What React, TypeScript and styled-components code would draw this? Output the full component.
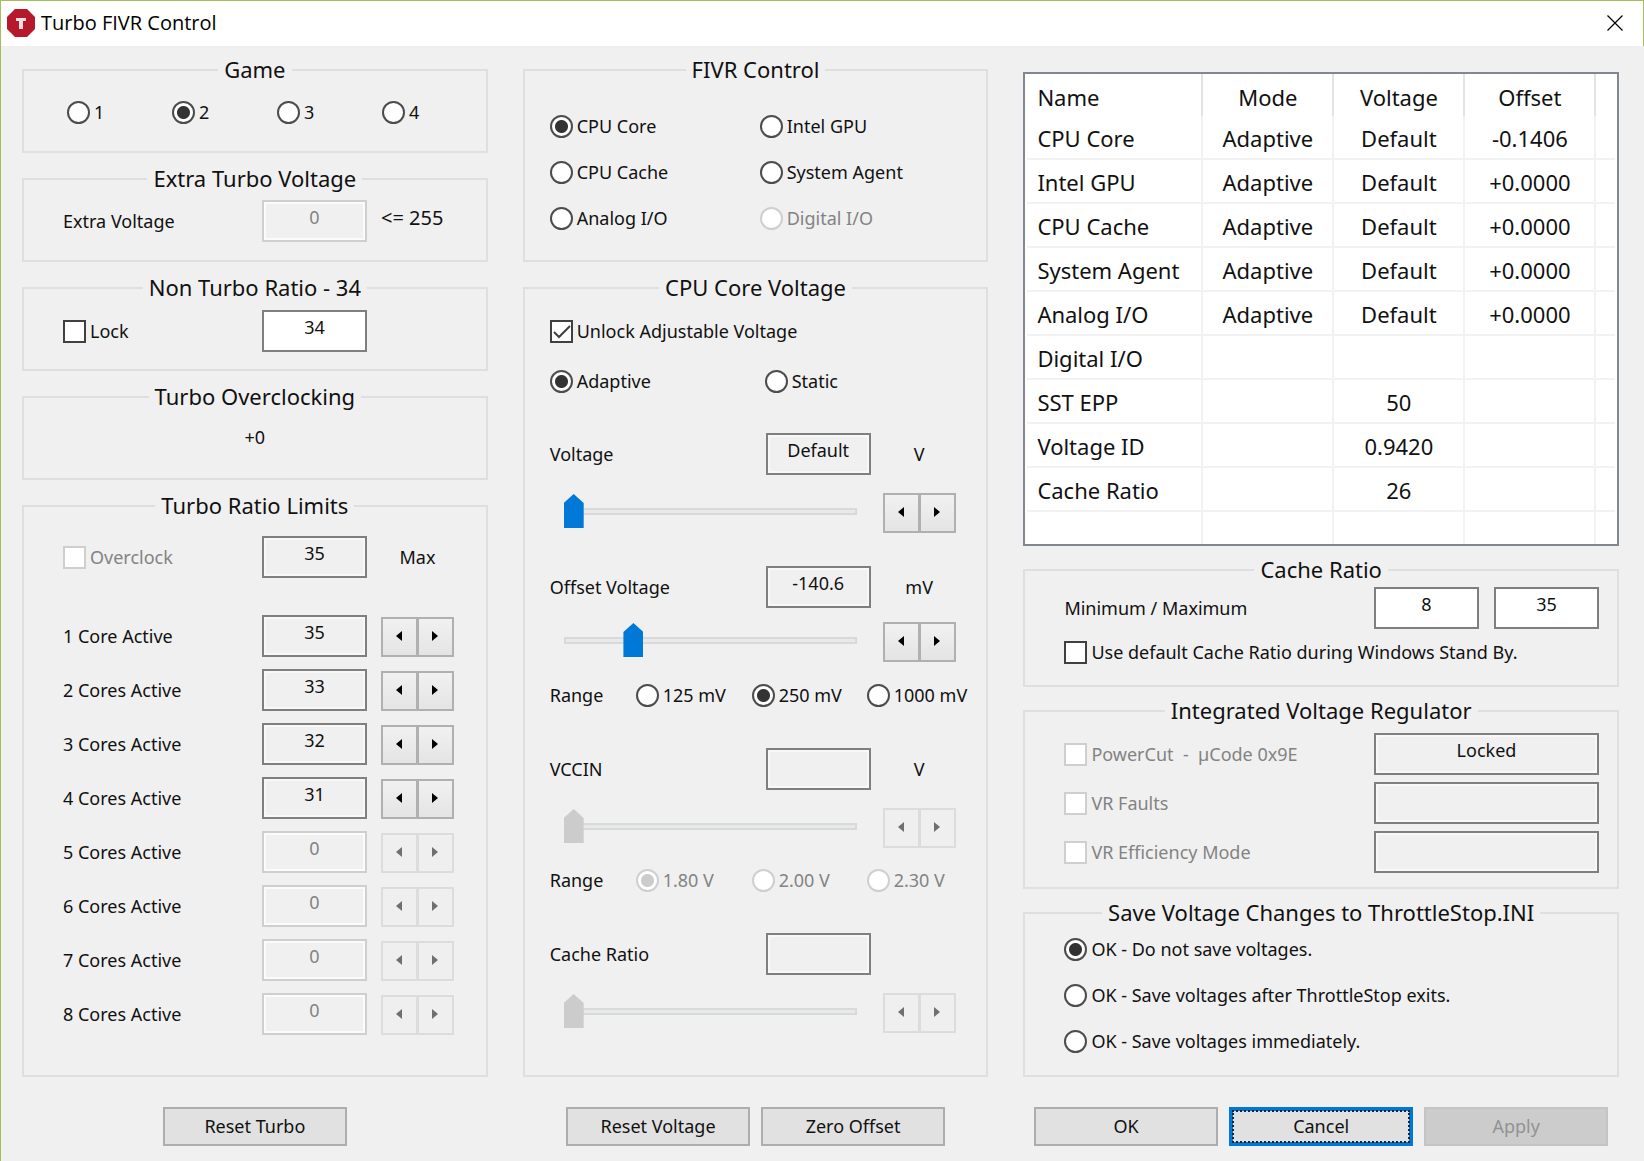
import React, { useState } from 'react';
import styled, { createGlobalStyle } from 'styled-components';

const GlobalStyle = createGlobalStyle`
  *, *::before, *::after { box-sizing: border-box; }
  body {
    margin: 0;
    background: #f0f0f0;
    color: #111;
    font: 18px/24px "Noto Sans", "Open Sans", sans-serif;
  }
  button, input { font: inherit; color: inherit; }
`;

const Dialog = styled.main`
  display: flex;
  flex-direction: column;
  min-height: 100vh;
  border-top: 1px solid #a2bf5c;
  border-left: 1px solid #a2bf5c;
`;

const TitleBar = styled.header`
  display: flex;
  align-items: center;
  gap: 6px;
  height: 45px;
  padding: 0 16px 2px 6px;
  background: #fff;
  border-right: 1px solid #a2bf5c;
`;

const Title = styled.h1`
  flex: 1;
  margin: 0;
  font: 20px/26px "Open Sans", "Noto Sans", sans-serif;
  color: #000;
`;

const CloseButton = styled.button`
  display: flex;
  padding: 4px;
  border: 0;
  background: none;
`;

const Columns = styled.div`
  display: grid;
  grid-template-columns: minmax(0, 466fr) minmax(0, 466fr) minmax(0, 596fr);
  column-gap: 35px;
  padding: 12px 25px 16px 21px;
`;

const Column = styled.div`
  display: flex;
  flex-direction: column;
  gap: 14px;
`;

const RightColumn = styled(Column)`
  gap: 12px;
  padding-top: 14px;
`;

const Group = styled.fieldset`
  min-width: 0;
  margin: 0;
  padding: 0;
  border: 2px solid #dfdfdf;
`;

const Legend = styled.legend`
  margin: 0 auto;
  padding: 0 6px 2px;
  font-size: 22px;
  line-height: 22px;
`;

const GameRow = styled.div`
  display: grid;
  grid-template-columns: repeat(4, 105px);
  padding: 18px 0 27px 43px;
`;

const TurboRows = styled.div<{ $top: number; $bottom: number }>`
  display: grid;
  gap: 12px;
  padding: ${p => p.$top}px 0 ${p => p.$bottom}px 39px;
`;

const TurboRow = styled.div<{ $spaced?: boolean }>`
  display: grid;
  grid-template-columns: 199px 105px 73px;
  column-gap: 14px;
  grid-template-columns: 185px 105px 73px;
  align-items: center;
  min-height: 42px;
  margin-bottom: ${p => (p.$spaced ? 25 : 0)}px;
`;

const Side = styled.span`
  padding-bottom: 6px;
  font-size: 20px;
  white-space: nowrap;
`;

const Unit = styled.span`
  text-align: center;
`;

const Field = styled.input`
  width: 100%;
  height: 42px;
  padding: 0 0 8px;
  border: 2px solid #7f7f7f;
  border-radius: 0;
  background: #fff;
  text-align: center;
  outline: none;
  &:read-only { background: #f0f0f0; box-shadow: inset 0 0 0 2px #f8f8f8; }
  &:disabled {
    border-color: #cfcfcf;
    background: #f0f0f0;
    box-shadow: inset 0 0 0 2px #fbfbfb;
    color: #838383;
  }
`;

const ChoiceLabel = styled.label<{ $disabled?: boolean }>`
  display: flex;
  align-items: center;
  gap: 4px;
  height: 24px;
  white-space: pre;
  color: ${p => (p.$disabled ? '#838383' : 'inherit')};
`;

const RadioInput = styled.input`
  appearance: none;
  flex: none;
  width: 23px;
  height: 23px;
  margin: 0;
  border: 2px solid #4c4c4c;
  border-radius: 50%;
  background: #fff;
  &:checked { background: radial-gradient(circle, #333 6px, #fff 7px); }
  &:disabled { border-color: #cfcfcf; }
  &:disabled:checked { background: radial-gradient(circle, #ccc 6px, #fff 7px); }
`;

const BoxFrame = styled.span`
  display: grid;
  flex: none;
  width: 23px;
  height: 23px;
  & > * { grid-area: 1 / 1; }
  & > svg { display: none; pointer-events: none; z-index: 1; }
  & > input:checked + svg { display: block; }
`;

const BoxInput = styled.input`
  appearance: none;
  width: 23px;
  height: 23px;
  margin: 0;
  border: 2px solid #404040;
  background: #fff;
  &:disabled { border-color: #cfcfcf; }
`;

const SpinFrame = styled.span`
  display: flex;
  width: 73px;
  height: 40px;
`;

const TurboSpin = styled.span`
  padding-top: 2px;
`;

const SpinButton = styled.button`
  display: flex;
  flex: 1;
  align-items: center;
  justify-content: center;
  padding: 0 1px 3px 0;
  border: 2px solid #b0b0b0;
  background: linear-gradient(#f1f1f1, #e4e4e4);
  color: #000;
  & + & { margin-left: -1px; }
  &:disabled { border-color: #dcdcdc; background: #efefef; color: #6f6f6f; }
`;

const FivrGrid = styled.div`
  display: grid;
  grid-template-columns: 210px auto;
  justify-content: start;
  row-gap: 22px;
  padding: 32px 0 30px 25px;
`;

const VoltagePanel = styled.div`
  display: flex;
  flex-direction: column;
  padding: 19px 0 42px 25px;
`;

const ModeRow = styled.div`
  display: grid;
  grid-template-columns: 215px auto;
  justify-content: start;
  padding-top: 26px;
`;

const ValueRow = styled.div<{ $gap: number }>`
  display: grid;
  grid-template-columns: 204px 105px 73px;
  column-gap: 12px;
  align-items: center;
  margin-top: ${p => p.$gap}px;
`;

const SliderRow = styled.div<{ $gap: number }>`
  display: grid;
  grid-template-columns: 293px 73px;
  column-gap: 26px;
  padding-left: 14px;
  margin-top: ${p => p.$gap}px;
`;

const RangeRow = styled.div<{ $gap: number }>`
  display: grid;
  grid-template-columns: 86px 116px 115px auto;
  justify-content: start;
  margin-top: ${p => p.$gap}px;
`;

const Slider = styled.input`
  appearance: none;
  width: 100%;
  height: 37px;
  margin: 0;
  background: none;
  &::-webkit-slider-runnable-track {
    height: 7px;
    background: #e7eaea;
    box-shadow: inset 0 0 0 2px #d9d9d9;
  }
  &::-webkit-slider-thumb {
    appearance: none;
    width: 20px;
    height: 34px;
    margin-top: -14px;
    background: #0078d7;
    clip-path: polygon(0 9px, 50% 0, 100% 9px, 100% 100%, 0 100%);
  }
  &:disabled::-webkit-slider-thumb { background: #ccc; }
`;

const TableFrame = styled.div`
  height: 474px;
  padding: 0 2px;
  border: 2px solid #828790;
  background: #fff;
  overflow: hidden;
`;

const VoltageTable = styled.table`
  width: 100%;
  table-layout: fixed;
  border-collapse: separate;
  border-spacing: 0;
  font-size: 22px;
  line-height: 28px;
  th, td {
    height: 44px;
    padding: 2px 0 0;
    border-right: 2px solid #f2f2f2;
    border-bottom: 2px solid #f2f2f2;
    text-align: center;
    font-weight: 400;
    white-space: nowrap;
  }
  th { height: 42px; padding: 3px 0 0; border-right-color: #e3e3e3; border-bottom: 0; }
  th:first-child, td:first-child { padding-left: 10px; text-align: left; }
  th:last-child, td:last-child { border-right: 0; }
`;

const CachePanel = styled.div`
  display: grid;
  row-gap: 11px;
  padding: 5px 18px 21px 39px;
`;

const CacheRow = styled.div`
  display: grid;
  grid-template-columns: 1fr 105px 105px;
  column-gap: 15px;
  align-items: center;
`;

const RegulatorPanel = styled.div`
  display: grid;
  row-gap: 7px;
  padding: 10px 18px 14px 39px;
`;

const RegulatorRow = styled.div`
  display: grid;
  grid-template-columns: 1fr 225px;
  align-items: center;
`;

const SavePanel = styled.div`
  display: grid;
  row-gap: 22px;
  padding: 12px 0 22px 39px;
`;

const Actions = styled.div`
  display: flex;
  justify-content: center;
  gap: 11px;
  margin-top: auto;
  padding-top: 16px;
`;

const ActionButton = styled.button<{ $focused?: boolean }>`
  width: 184px;
  height: 39px;
  padding: 0 0 2px;
  border: ${p => (p.$focused ? '4px solid #0078d7' : '2px solid #adadad')};
  background: #e1e1e1;
  outline: ${p => (p.$focused ? '2px dotted #222' : 'none')};
  outline-offset: -5px;
  &:disabled { border-color: #c4c4c4; background: #ccc; color: #929292; }
`;

type ChoiceProps = {
  label: string;
  name?: string;
  checked?: boolean;
  disabled?: boolean;
};

const Radio = ({ label, name, checked, disabled }: ChoiceProps) => (
  <ChoiceLabel $disabled={disabled}>
    <RadioInput type="radio" name={name} defaultChecked={checked} disabled={disabled} />
    {label}
  </ChoiceLabel>
);

const Check = ({ label, checked, disabled }: ChoiceProps) => (
  <ChoiceLabel $disabled={disabled}>
    <BoxFrame>
      <BoxInput type="checkbox" defaultChecked={checked} disabled={disabled} />
      <svg width="23" height="23" viewBox="0 0 23 23" fill="none" stroke="#404040" strokeWidth="2">
        <path d="M4 12 L9 17 L20 6" />
      </svg>
    </BoxFrame>
    {label}
  </ChoiceLabel>
);

type SpinnerProps = { label: string; disabled?: boolean; onStep?: (step: number) => void };

const Spinner = ({ label, disabled, onStep }: SpinnerProps) => (
  <SpinFrame>
    <SpinButton type="button" aria-label={`Decrease ${label}`} disabled={disabled} onClick={() => onStep?.(-1)}>
      <svg width="6" height="10" viewBox="0 0 6 10" fill="currentColor"><path d="M6 0v10L0 5z" /></svg>
    </SpinButton>
    <SpinButton type="button" aria-label={`Increase ${label}`} disabled={disabled} onClick={() => onStep?.(1)}>
      <svg width="6" height="10" viewBox="0 0 6 10" fill="currentColor"><path d="M0 0v10l6-5z" /></svg>
    </SpinButton>
  </SpinFrame>
);

const rows = [
  ['CPU Core', 'Adaptive', 'Default', '-0.1406'],
  ['Intel GPU', 'Adaptive', 'Default', '+0.0000'],
  ['CPU Cache', 'Adaptive', 'Default', '+0.0000'],
  ['System Agent', 'Adaptive', 'Default', '+0.0000'],
  ['Analog I/O', 'Adaptive', 'Default', '+0.0000'],
  ['Digital I/O', '', '', ''],
  ['SST EPP', '', '50', ''],
  ['Voltage ID', '', '0.9420', ''],
  ['Cache Ratio', '', '26', ''],
  ['', '', '', ''],
];

export default function App() {
  const [ratios, setRatios] = useState([35, 33, 32, 31, 0, 0, 0, 0]);
  const [offset, setOffset] = useState(-140.6);

  const stepRatio = (index: number, step: number) =>
    setRatios(ratios.map((r, i) => (i === index ? r + step : r)));

  return (
    <>
      <GlobalStyle />
      <Dialog>
        <TitleBar>
          <svg width="28" height="28" viewBox="0 0 28 28" aria-hidden="true">
            <path d="M8 0h12l8 8v12l-8 8H8l-8-8V8z" fill="#b5192b" />
            <path d="M9 9h10v3h-3v8h-4v-8H9z" fill="#f3dfe1" />
          </svg>
          <Title>Turbo FIVR Control</Title>
          <CloseButton type="button" aria-label="Close">
            <svg width="16" height="16" viewBox="0 0 16 16" stroke="#000" strokeWidth="1.2">
              <path d="M0.5 0.5l15 15M15.5 0.5l-15 15" />
            </svg>
          </CloseButton>
        </TitleBar>

        <Columns>
          <Column>
            <Group>
              <Legend>Game</Legend>
              <GameRow>
                {['1', '2', '3', '4'].map(n => (
                  <Radio key={n} name="game" label={n} checked={n === '2'} />
                ))}
              </GameRow>
            </Group>

            <Group>
              <Legend>Extra Turbo Voltage</Legend>
              <TurboRows $top={9} $bottom={18}>
                <TurboRow>
                  <label htmlFor="extra-voltage">Extra Voltage</label>
                  <Field id="extra-voltage" defaultValue="0" disabled />
                  <Side>&lt;= 255</Side>
                </TurboRow>
              </TurboRows>
            </Group>

            <Group>
              <Legend>Non Turbo Ratio - 34</Legend>
              <TurboRows $top={10} $bottom={17}>
                <TurboRow>
                  <Check label="Lock" />
                  <Field aria-label="Non Turbo Ratio" defaultValue="34" />
                </TurboRow>
              </TurboRows>
            </Group>

            <Group>
              <Legend>Turbo Overclocking</Legend>
              <Readout>+0</Readout>
            </Group>

            <Group>
              <Legend>Turbo Ratio Limits</Legend>
              <TurboRows $top={18} $bottom={40}>
                <TurboRow $spaced>
                  <Check label="Overclock" disabled />
                  <Field aria-label="Maximum ratio" value="35" readOnly />
                  <Unit>Max</Unit>
                </TurboRow>
                {ratios.map((ratio, i) => (
                  <TurboRow key={i}>
                    <label htmlFor={`core-${i}`}>{`${i + 1} ${i ? 'Cores' : 'Core'} Active`}</label>
                    <Field id={`core-${i}`} value={ratio} readOnly disabled={i > 3} />
                    <TurboSpin>
                      <Spinner label={`ratio ${i + 1}`} disabled={i > 3} onStep={s => stepRatio(i, s)} />
                    </TurboSpin>
                  </TurboRow>
                ))}
              </TurboRows>
            </Group>

            <Actions>
              <ActionButton type="button">Reset Turbo</ActionButton>
            </Actions>
          </Column>

          <Column>
            <Group>
              <Legend>FIVR Control</Legend>
              <FivrGrid>
                <Radio name="domain" label="CPU Core" checked />
                <Radio name="domain" label="Intel GPU" />
                <Radio name="domain" label="CPU Cache" />
                <Radio name="domain" label="System Agent" />
                <Radio name="domain" label="Analog I/O" />
                <Radio name="domain" label="Digital I/O" disabled />
              </FivrGrid>
            </Group>

            <Group>
              <Legend>CPU Core Voltage</Legend>
              <VoltagePanel>
                <Check label="Unlock Adjustable Voltage" checked />
                <ModeRow>
                  <Radio name="mode" label="Adaptive" checked />
                  <Radio name="mode" label="Static" />
                </ModeRow>

                <ValueRow $gap={40}>
                  <label htmlFor="voltage">Voltage</label>
                  <Field id="voltage" value="Default" readOnly />
                  <Unit>V</Unit>
                </ValueRow>
                <SliderRow $gap={18}>
                  <Slider type="range" aria-label="Voltage" defaultValue={0} />
                  <Spinner label="voltage" />
                </SliderRow>

                <ValueRow $gap={33}>
                  <label htmlFor="offset">Offset Voltage</label>
                  <Field id="offset" value={offset.toFixed(1)} readOnly />
                  <Unit>mV</Unit>
                </ValueRow>
                <SliderRow $gap={14}>
                  <Slider
                    type="range"
                    aria-label="Offset Voltage"
                    min={-250}
                    max={250}
                    step={0.1}
                    value={offset}
                    onChange={e => setOffset(Number(e.target.value))}
                  />
                  <Spinner label="offset voltage" onStep={s => setOffset(offset + s)} />
                </SliderRow>
                <RangeRow $gap={21}>
                  <span>Range</span>
                  <Radio name="offset-range" label="125 mV" />
                  <Radio name="offset-range" label="250 mV" checked />
                  <Radio name="offset-range" label="1000 mV" />
                </RangeRow>

                <ValueRow $gap={41}>
                  <label htmlFor="vccin">VCCIN</label>
                  <Field id="vccin" value="" readOnly />
                  <Unit>V</Unit>
                </ValueRow>
                <SliderRow $gap={18}>
                  <Slider type="range" aria-label="VCCIN" defaultValue={0} disabled />
                  <Spinner label="VCCIN" disabled />
                </SliderRow>
                <RangeRow $gap={20}>
                  <span>Range</span>
                  <Radio name="vccin-range" label="1.80 V" checked disabled />
                  <Radio name="vccin-range" label="2.00 V" disabled />
                  <Radio name="vccin-range" label="2.30 V" disabled />
                </RangeRow>

                <ValueRow $gap={41}>
                  <label htmlFor="cache-ratio">Cache Ratio</label>
                  <Field id="cache-ratio" value="" readOnly />
                </ValueRow>
                <SliderRow $gap={18}>
                  <Slider type="range" aria-label="Cache Ratio" defaultValue={0} disabled />
                  <Spinner label="cache ratio" disabled />
                </SliderRow>
              </VoltagePanel>
            </Group>

            <Actions>
              <ActionButton type="button">Reset Voltage</ActionButton>
              <ActionButton type="button">Zero Offset</ActionButton>
            </Actions>
          </Column>

          <RightColumn>
            <TableFrame>
              <VoltageTable>
                <colgroup>
                  <col width="176" />
                  <col width="131" />
                  <col width="131" />
                  <col width="131" />
                  <col />
                </colgroup>
                <thead>
                  <tr>
                    <th scope="col">Name</th>
                    <th scope="col">Mode</th>
                    <th scope="col">Voltage</th>
                    <th scope="col">Offset</th>
                    <th />
                  </tr>
                </thead>
                <tbody>
                  {rows.map((row, i) => (
                    <tr key={i}>
                      {row.map((cell, j) => <td key={j}>{cell}</td>)}
                      <td />
                    </tr>
                  ))}
                </tbody>
              </VoltageTable>
            </TableFrame>

            <Group>
              <Legend>Cache Ratio</Legend>
              <CachePanel>
                <CacheRow>
                  <label htmlFor="cache-min">Minimum / Maximum</label>
                  <Field id="cache-min" defaultValue="8" />
                  <Field aria-label="Maximum" defaultValue="35" />
                </CacheRow>
                <Check label="Use default Cache Ratio during Windows Stand By." />
              </CachePanel>
            </Group>

            <Group>
              <Legend>Integrated Voltage Regulator</Legend>
              <RegulatorPanel>
                <RegulatorRow>
                  <Check label={'PowerCut  -  µCode 0x9E'} disabled />
                  <Field aria-label="PowerCut state" value="Locked" readOnly />
                </RegulatorRow>
                <RegulatorRow>
                  <Check label="VR Faults" disabled />
                  <Field aria-label="VR Faults state" value="" readOnly />
                </RegulatorRow>
                <RegulatorRow>
                  <Check label="VR Efficiency Mode" disabled />
                  <Field aria-label="VR Efficiency Mode state" value="" readOnly />
                </RegulatorRow>
              </RegulatorPanel>
            </Group>

            <Group>
              <Legend>Save Voltage Changes to ThrottleStop.INI</Legend>
              <SavePanel>
                <Radio name="save" label="OK - Do not save voltages." checked />
                <Radio name="save" label="OK - Save voltages after ThrottleStop exits." />
                <Radio name="save" label="OK - Save voltages immediately." />
              </SavePanel>
            </Group>

            <Actions>
              <ActionButton type="button">OK</ActionButton>
              <ActionButton type="button" $focused>Cancel</ActionButton>
              <ActionButton type="button" disabled>Apply</ActionButton>
            </Actions>
          </RightColumn>
        </Columns>
      </Dialog>
    </>
  );
}

const Readout = styled.p`
  margin: 0;
  padding: 16px 0 29px;
  text-align: center;
`;
